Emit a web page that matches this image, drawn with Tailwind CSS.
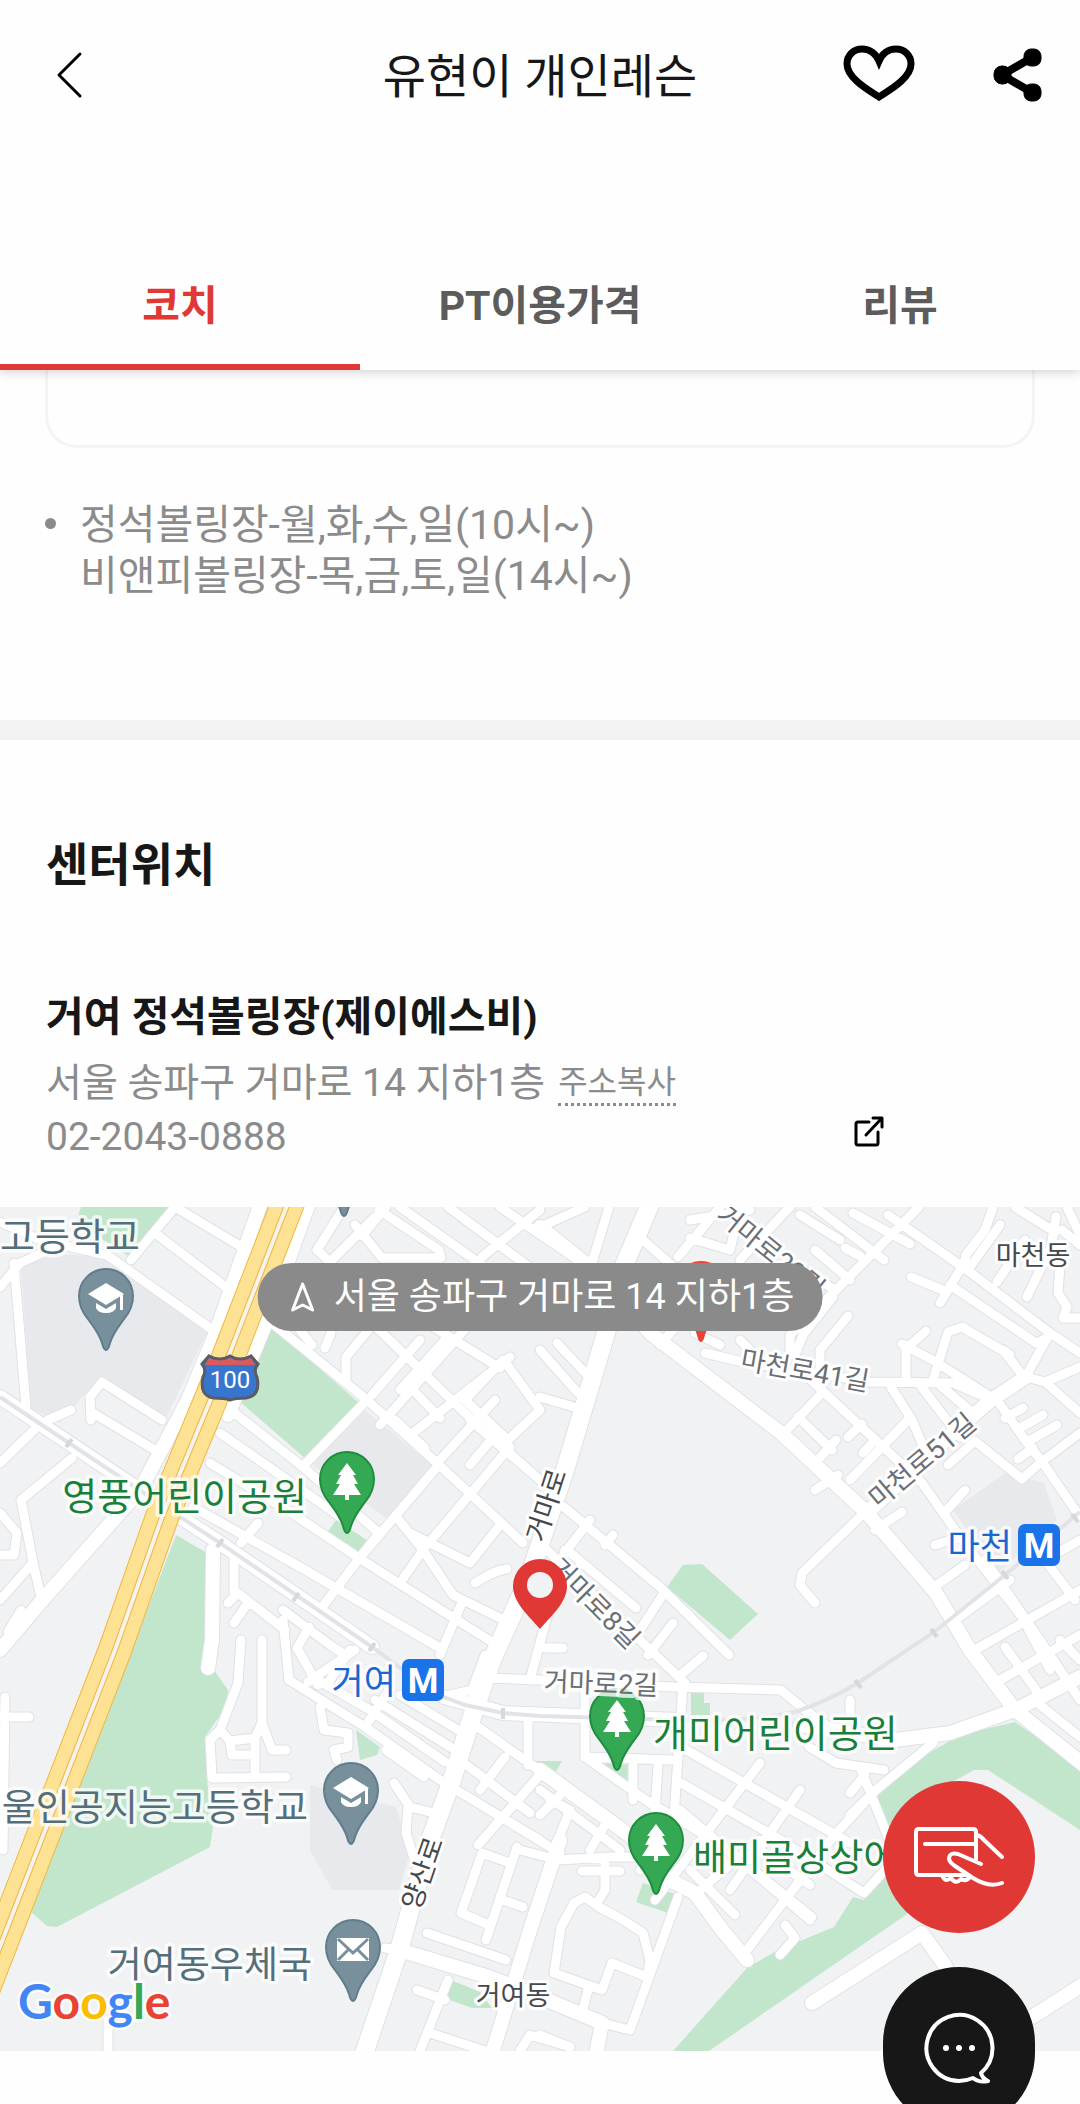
<!DOCTYPE html>
<html lang="ko">
<head>
    <meta charset="UTF-8">
    <meta name="viewport" content="width=device-width, initial-scale=1.0">
    <title>유현이 개인레슨</title>
    <script src="https://cdn.jsdelivr.net/npm/@tailwindcss/browser@4"></script>
</head>
<body class="bg-[#fefefe] font-[Roboto,'Noto_Sans_CJK_KR',sans-serif] text-[#171717] min-h-screen overflow-x-hidden">
    <!-- Header -->
    <header class="sticky top-0 z-20 bg-[#fefefe] shadow-[0_2px_10px_rgba(0,0,0,0.18)]">
        <div class="grid grid-cols-[1fr_auto_1fr] items-center h-[150px] px-[38px]">
            <button type="button" aria-label="뒤로" class="w-[58px] pl-[10px]">
                <svg class="w-[48px] h-[48px]" viewBox="0 0 48 48" fill="none" stroke="#000" stroke-width="3" stroke-linecap="round" stroke-linejoin="round"><path d="M32 3L11 24L32 45"/></svg>
            </button>
            <h1 class="pt-[4px] text-[47px] leading-[60px]">유현이 개인레슨</h1>
            <div class="flex items-center justify-end gap-[78px]">
                <button type="button" aria-label="찜하기">
                    <svg class="w-[72px] h-[60px]" viewBox="0 0 72 60" fill="none" stroke="#000" stroke-width="7"><path d="M36 52C29 47 4 34 4 19C4 10 11 4 19 4C27 4 33 9 36 16C39 9 45 4 53 4C61 4 68 10 68 19C68 34 43 47 36 52Z"/></svg>
                </button>
                <button type="button" aria-label="공유하기">
                    <svg class="w-[49px] h-[54px]" viewBox="0 0 49 54" stroke="#000"><path d="M40 9L9 27L40 45" fill="none" stroke-width="8"/><rect x="1" y="18" width="17" height="18" rx="8"/><rect x="31" y="1" width="17" height="17" rx="7"/><rect x="31" y="36" width="17" height="17" rx="7"/></svg>
                </button>
            </div>
        </div>
        <nav class="grid grid-cols-3 pt-[98px] text-[41px] leading-[116px] font-bold text-center text-[#5c5c5c]">
            <a href="#coach" class="border-b-[6px] border-[#e03835] text-[#e03835]">코치</a>
            <a href="#price" class="border-b-[6px] border-transparent">PT이용가격</a>
            <a href="#review" class="border-b-[6px] border-transparent">리뷰</a>
        </nav>
    </header>

    <main>
        <!-- Coach schedule -->
        <section id="coach" class="px-[45px] pb-[118px]">
            <div class="h-[78px] border-3 border-t-0 border-[#f4f4f4] rounded-b-[32px]"></div>
            <ul class="pt-[52px] text-[41px] leading-[51px] text-[#8b8b8b]">
                <li class="flex items-start gap-[24px]">
                    <span class="mt-[18px] size-[11px] rounded-full bg-[#8b8b8b]"></span>
                    <p>정석볼링장-월,화,수,일(10시~)<br>비앤피볼링장-목,금,토,일(14시~)</p>
                </li>
            </ul>
        </section>

        <div class="h-[20px] bg-[#f3f3f3]"></div>

        <!-- Center location -->
        <section class="pt-[95px]">
            <div class="px-[46px]">
                <h2 class="text-[46px] leading-[60px] font-bold">센터위치</h2>
                <h3 class="pt-[95px] text-[41px] leading-[54px] font-bold">거여 정석볼링장(제이에스비)</h3>
                <div class="flex items-end justify-between pt-[12px] pr-[148px] text-[39px] leading-[54px] text-[#8b8b8b]">
                    <div>
                        <p class="flex items-center gap-[13px]">서울 송파구 거마로 14 지하1층
                            <button type="button" class="h-[45px] border-b-3 border-dotted border-[#8b8b8b] text-[32px] leading-[42px]">주소복사</button>
                        </p>
                        <p><a href="tel:02-2043-0888">02-2043-0888</a></p>
                    </div>
                    <a href="#map" aria-label="지도 열기" class="pb-[16px]">
                        <svg class="w-[34px] h-[34px]" viewBox="0 0 34 34" fill="none" stroke="#000" stroke-width="3" stroke-linecap="round" stroke-linejoin="round"><path d="M17 8H6Q4 8 4 10V29Q4 31 6 31H24Q26 31 26 29V18M21 4H30V13M30 4L14 21"/></svg>
                    </a>
                </div>
            </div>

            <!-- Map -->
            <div id="map" class="relative mt-[43px] h-[844px] overflow-hidden bg-[#f1f2f4]">
                <svg class="w-full h-full" viewBox="0 1207 1080 844" preserveAspectRatio="xMidYMid slice" font-size="38">
                    <defs>
                        <path id="pin" d="M0 0C-2 0-3-3-4-7C-7-17-13-24-18-31C-24-38-27-45-27-54A27 27 0 0 1 27-54C27-45 24-38 18-31C13-24 7-17 4-7C3-3 2 0 0 0Z"/>
                        <g id="tree" fill="#fff"><path d="M0-70L9-58H6L11-49H7L14-38H2V-33H-2V-38H-14L-7-49H-11L-6-58H-9Z"/></g>
                        <g id="cap" fill="#fff"><path d="M-18-56L0-67L18-56L0-45ZM-10-47L0-41L10-47V-42Q8-37 0-37Q-8-37-10-42ZM14-55H17V-40H14Z"/></g>
                        <g id="minor">
                            <path d="M0 1222L40 1240L107 1255L210 1328M131 1260L175 1207L240 1246M155 1233L227 1288M0 1287L20 1263L60 1245M14 1263L26 1407M34 1430L0 1463M72 1458L21 1500L34 1567L41 1597M48 1420L71 1410M91 1420L90 1397L102 1382L162 1420M93 1413L155 1450M0 1513L17 1533L14 1555L0 1555M31 1565L0 1600M21 1610L8 1632"/>
                            <path d="M344 1207L317 1250L330 1262L375 1217M355 1225L382 1258L441 1258L439 1250L379 1210M386 1207L362 1236M448 1207L560 1290M482 1257L540 1210M400 1207L482 1265M500 1207L600 1275M540 1227L585 1207M609 1207L592 1263"/>
                            <path d="M272 1323L367 1400L437 1463L523 1543M367 1400L306 1463M227 1407L303 1467L379 1533L358 1560M220 1433L345 1520M210 1463L290 1512L362 1560L441 1610L492 1642M437 1467L358 1560L320 1610M193 1507L300 1567L440 1648M399 1520L423 1550L453 1595L463 1600L440 1655M423 1550L400 1583M410 1533L470 1563L500 1525M510 1447L427 1545M258 1523L241 1543M463 1600L500 1618M475 1583Q495 1570 507 1569M283 1620L289 1680M283 1610L330 1645L345 1655M309 1627L297 1648L318 1685M350 1650L330 1680"/>
                            <path d="M234 1557L234 1597L228 1603M238 1593L285 1630M248 1603L234 1623M300 1330L312 1345M331 1333L325 1348M346 1380L346 1357L385 1310M372 1323L465 1413L540 1480M430 1325L500 1368M503 1360L465 1400L508 1440L540 1410L505 1362M482 1310L380 1425M510 1357L413 1433M437 1463L495 1400M413 1390L440 1418M395 1420L425 1448M420 1340L372 1395M445 1340L400 1390M557 1343L592 1380M540 1350L578 1393M540 1397L574 1407M470 1465L495 1435M540 1480L470 1420"/>
                            <path d="M643 1240L685 1277M720 1207L678 1257M690 1238L730 1250M690 1220L750 1210M730 1250L738 1215M919 1207L836 1290L790 1335L790 1355M790 1207L740 1260M815 1207L884 1260M853 1213L910 1244M800 1215L840 1240M815 1250L850 1280M845 1248L860 1256M795 1265L835 1290M833 1297L803 1335L795 1355M848 1316L820 1350L820 1375M695 1333L720 1345M660 1345L715 1280M740 1340L760 1360M888 1215L967 1270L1050 1333L1080 1353M963 1265L940 1303M911 1277L945 1291M950 1285L1036 1343L1047 1338M993 1207L985 1230L966 1255L963 1267M1000 1225L970 1267M1056 1217L1051 1247L1027 1297M1025 1240L997 1282M1060 1265L1058 1293L1067 1307L1063 1318H1080M1062 1230L1080 1245M1015 1207L1055 1232M1067 1207L1080 1235"/>
                            <path d="M705 1353L747 1363L870 1382L953 1383L993 1400M1023 1376L1003 1350L1010 1355L962 1327L948 1332L933 1380M902 1344L936 1362L991 1397M906 1345V1380M926 1331L908 1347M1023 1376L1045 1382L1080 1367M1045 1382L1080 1413M997 1400L1025 1440L1043 1463L1080 1517M975 1441L1022 1479L1040 1463M948 1465L975 1441M1005 1418L1023 1408M1020 1428L1043 1415M1027 1442L1057 1425M1018 1459L1033 1448M1040 1463L1080 1433M1050 1333L1026 1376M891 1387L912 1420L926 1453M920 1385L960 1437M940 1385L975 1415M908 1420L850 1480M800 1370L922 1483L960 1537L991 1577L1022 1617L1050 1670M822 1393L784 1433M798 1417L832 1450M836 1440L815 1463M848 1437L862 1424M863 1453L875 1440M815 1490L838 1475M864 1513L802 1573L800 1585L815 1603M875 1530L902 1512M960 1537L935 1545M945 1512L965 1490"/>
                            <path d="M930 1590L965 1565M955 1620L1010 1580M975 1650L1080 1590M1000 1680L1080 1635M985 1560L1040 1640L1080 1700M1080 1540L1045 1560L1075 1600M1060 1640L1080 1660M1005 1647L1036 1690M1040 1705L1080 1737"/>
                            <path d="M564 1507L660 1587L729 1655M590 1520L567 1550L636 1608M664 1593L640 1630M605 1545L613 1535M673 1623L648 1655M547 1550L643 1643L685 1683M565 1550L530 1680M545 1648H563"/>
                            <path d="M241 1640L238 1683L220 1730L210 1740L212 1778L286 1777M262 1640V1723L272 1750H286M220 1730L230 1741L255 1738L262 1723M255 1738V1777M230 1741L232 1755H255M289 1680L365 1727L440 1780L560 1853M318 1680L370 1710L445 1762M375 1700L455 1750M389 1690L365 1727M355 1650L308 1682M320 1707L324 1730L348 1733V1747L334 1750L337 1760M386 1750L424 1777M400 1695L463 1733M478 1727L560 1785M460 1760L530 1813M451 1787L540 1840M528 1720V1765M540 1775L478 1845M394 1783L410 1807L430 1812M408 1807L406 1833L417 1867M505 1757L480 1790M450 1695L472 1690L485 1655M489 1678L540 1680L674 1687L781 1690L805 1710M5 1697L3 1850M0 1717H29"/>
                            <path d="M510 1863L482 1853L461 1913L489 1925M517 1847L486 1940M503 1900L523 1907M427 1933L506 1960M417 1990L445 2000M448 1980L420 2051M430 2033L485 2051M385 1948L399 1950M108 2020V2060M520 2051L530 2035L570 2047"/>
                            <path d="M683 1683L678 1757L674 1817L640 1870M585 1683V1757L671 1760M585 1757L650 1803L719 1843L812 1917M681 1747L850 1843M681 1783L781 1840L864 1893L885 1870M680 1810L810 1920M760 1763L678 1870L655 1900M800 1790L730 1890M876 1790L833 1837L747 1950M933 1743L876 1790L850 1815M809 1747L836 1763L884 1770M860 1767L888 1837M865 1775L850 1793M520 1850L558 1860L609 1857L640 1857M633 1765V1800M658 1765L655 1812M703 1656L683 1673M850 1700V1720M805 1710L840 1735M690 1870L735 1915M760 1850L810 1885M785 1925L795 1938L780 1955M700 1890L760 1840M605 1863V1890L597 1903M582 1871H620M550 1800L570 1810L560 1835M540 1815L560 1795M605 1825L590 1850M540 1790L620 1850M585 1897L599 1907L623 1920L643 1933L650 1960L647 1977L612 1963L602 1990L554 1973L561 1927L574 1903ZM588 1990L582 2013M678 1897L630 2030L602 2023M540 2035L570 2047"/>
                        </g>
                        <g id="major">
                            <path d="M262 1200L215 1335L188 1400L140 1490L45 1597L0 1650M310 1200L265 1325L228 1415M0 1397L165 1507L220 1543L372 1647M444 1697L503 1713L678 1720M213 1550L212 1640L208 1668M540 1770L640 1843L670 1880L695 1893L722 1930L747 1960M399 1950L489 1977L540 1997L602 2023L595 2060M560 1840L530 1930L490 2060M1080 1677L1015 1710L950 1733L895 1740L800 1725M812 2003L922 1933L946 1967M1032 2017L1090 1980M1026 1377L991 1400L953 1433L870 1510"/>
                            <path d="M540 1227L600 1275L650 1333L781 1433L867 1513L936 1593L970 1650L1015 1710L1090 1770"/>
                        </g>
                        <g id="main">
                            <path d="M652 1200L620 1275L606 1333L565 1470L528 1580L492 1660L472 1717L451 1783L430 1840L399 1950L362 2060"/>
                        </g>
                    </defs>

                    <!-- school and station grounds -->
                    <g fill="#e8e9ed">
                        <path d="M21 1267L45 1253L107 1257L207 1333L165 1420L100 1377L59 1423L31 1408ZM365 1410L434 1467L389 1520L310 1463ZM1005 1473L1044 1483L1057 1520L998 1573L953 1510ZM310 1785L396 1807L410 1853L399 1890H332L310 1850Z"/>
                    </g>
                    <!-- parks -->
                    <g fill="#c2e6cc">
                        <path d="M81 1207H170L131 1258L76 1222ZM267 1323L358 1402L307 1460L238 1400ZM336 1520L370 1542L360 1555L327 1533ZM176 1535L207 1553V1640L214 1670L228 1690L226 1707L205 1737L207 1780L213 1827L210 1847L57 1927L47 1926L31 1912ZM683 1565L702 1564L758 1614L730 1640L667 1587ZM356 1730L380 1747L377 1755L360 1760ZM451 1980L480 1992L492 2008H472L444 1998ZM691 1692H704V1703H710V1715H691ZM595 1763L633 1765V1788ZM530 1761H562L554 1775ZM643 1883L678 1895L671 1914L636 1902Z"/>
                        <path d="M1015 1722L1080 1767V1830L988 1770H974L920 1800L905 1860L910 1912L709 2051H673L747 1968L778 1950L834 1927L853 1897L864 1900L884 1873L888 1837L876 1795L922 1757L960 1735Z"/>
                    </g>
                    <!-- roads: grey casing below, white on top -->
                    <g fill="none" stroke="#dfe1e5" stroke-linecap="round" stroke-linejoin="round">
                        <use href="#minor" stroke-width="11"/>
                        <use href="#major" stroke-width="16"/>
                        <use href="#main" stroke-width="20"/>
                    </g>
                    <g fill="none" stroke="#fff" stroke-linecap="round" stroke-linejoin="round">
                        <use href="#minor" stroke-width="9"/>
                        <use href="#major" stroke-width="14"/>
                        <use href="#main" stroke-width="18"/>
                    </g>
                    <!-- subway line -->
                    <path d="M0 1397L69 1443L165 1507L220 1543L372 1647L403 1670L444 1697L465 1705L503 1713L540 1716L678 1720Q750 1722 795 1712Q830 1700 858 1683L934 1632L1005 1575L1080 1512" fill="none" stroke="#e1e3e6" stroke-width="4"/>
                    <path d="M66 1447L72 1439M217 1547L223 1539M293 1601L299 1593M369 1651L375 1643M503 1708V1719M855 1680L861 1688M931 1629L937 1637M1002 1571L1008 1579M1072 1514L1078 1522" stroke="#d6d9dc" stroke-width="4"/>
                    <!-- expressway -->
                    <g fill="none">
                        <path d="M289 1200L229 1355L162 1517L115 1650L-20 1998" stroke="#f0b840" stroke-width="34"/>
                        <path d="M289 1200L229 1355L162 1517L115 1650L-20 1998" stroke="#fde293" stroke-width="32"/>
                        <path d="M289 1200L229 1355L162 1517L115 1650L-20 1998" stroke="#eeb541" stroke-width="6"/>
                        <path d="M289 1200L229 1355L162 1517L115 1650L-20 1998" stroke="#f5f3ec" stroke-width="4"/>
                    </g>

                    <!-- route shield -->
                    <g>
                        <path d="M209 1356Q220 1362 230 1356Q240 1362 251 1356L258 1364Q253 1370 257 1377Q261 1396 246 1398Q236 1398 230 1400Q224 1398 214 1398Q199 1396 203 1377Q207 1370 202 1364Z" fill="#3875cf" stroke="#5b5b63" stroke-width="3"/>
                        <path d="M209 1358Q220 1363 230 1358Q240 1363 251 1358L255 1365H205Z" fill="#dd5a5a"/>
                        <text x="230" y="1388" text-anchor="middle" font-size="24" fill="#fff">100</text>
                    </g>

                    <!-- street names -->
                    <g text-anchor="middle" font-size="27" fill="#6b6f75" stroke="#fff" stroke-width="6" stroke-linejoin="round" paint-order="stroke">
                        <text transform="translate(771 1251) rotate(39)" y="10">거마로29길</text>
                        <text transform="translate(805 1370) rotate(10)" y="10">마천로41길</text>
                        <text transform="translate(922 1460) rotate(-40)" y="10">마천로51길</text>
                        <text transform="translate(595 1603) rotate(45)" y="10">거마로8길</text>
                        <text transform="translate(546 1505) rotate(-72)" y="10" fill="#45484d">거마로</text>
                        <text transform="translate(422 1873) rotate(-71)" y="10" fill="#45484d">양산로</text>
                        <text x="1033" y="1265" fill="#45484d">마천동</text>
                        <text x="513" y="2005" fill="#45484d">거여동</text>
                    </g>

                    <!-- place pins -->
                    <g fill="#78909c" stroke="#607d8b" stroke-width="2">
                        <use href="#pin" x="106" y="1350"/>
                        <use href="#pin" x="344" y="1216"/>
                        <use href="#pin" x="351" y="1844"/>
                        <use href="#pin" x="353" y="2001"/>
                    </g>
                    <use href="#cap" x="106" y="1350"/>
                    <use href="#cap" x="351" y="1844"/>
                    <rect x="337" y="1938" width="32" height="23" fill="#fff"/>
                    <path d="M338 1939L353 1953L368 1939M338 1960L349 1949M368 1960L357 1949" fill="none" stroke="#78909c" stroke-width="3"/>
                    <g fill="#34a853" stroke="#1e8e3e" stroke-width="2">
                        <use href="#pin" x="347" y="1533"/>
                        <use href="#pin" x="617" y="1770"/>
                        <use href="#pin" x="656" y="1894"/>
                    </g>
                    <use href="#tree" x="347" y="1533"/>
                    <use href="#tree" x="617" y="1770"/>
                    <use href="#tree" x="656" y="1894"/>
                    <use href="#pin" x="701" y="1342" fill="#ea4335"/>
                    <text transform="translate(601 1683) rotate(2)" y="10" text-anchor="middle" font-size="27" fill="#6b6f75" stroke="#fff" stroke-opacity="0.8" stroke-width="8" stroke-linejoin="round" paint-order="stroke">거마로2길</text>

                    <!-- place names -->
                    <g stroke="#fff" stroke-opacity="0.75" stroke-width="7" stroke-linejoin="round" paint-order="stroke">
                        <g fill="#546e7a">
                            <text x="0" y="1250">고등학교</text>
                            <text x="308" y="1821" text-anchor="end" font-size="37">울인공지능고등학교</text>
                            <text x="312" y="1978" text-anchor="end" font-size="37">거여동우체국</text>
                        </g>
                        <g fill="#188038">
                            <text x="307" y="1510" text-anchor="end">영풍어린이공원</text>
                            <text x="653" y="1747">개미어린이공원</text>
                            <text x="693" y="1871" font-size="37">배미골상상어린이공원</text>
                        </g>
                        <g fill="#1967d2" font-size="35">
                            <text x="1012" y="1559" text-anchor="end">마천</text>
                            <text x="396" y="1694" text-anchor="end">거여</text>
                        </g>
                    </g>
                    <g fill="#1a73e8">
                        <rect x="1018" y="1524" width="42" height="42" rx="7"/>
                        <rect x="402" y="1659" width="42" height="42" rx="7"/>
                    </g>
                    <g fill="#fff" text-anchor="middle" font-size="35" font-weight="700">
                        <text x="1039" y="1558">M</text>
                        <text x="423" y="1693">M</text>
                    </g>

                    <!-- center marker -->
                    <path fill="#e03835" d="M540 1629C530 1617 513 1603 513 1586A27 27 0 0 1 567 1586C567 1603 550 1617 540 1629Z"/>
                    <circle cx="540" cy="1585" r="13" fill="#f1f2f4"/>

                    <text x="18" y="2019" font-family="Lato, sans-serif" font-size="48" font-weight="700" stroke="#fff" stroke-opacity="0.8" stroke-width="5" paint-order="stroke"><tspan fill="#4285f4">G</tspan><tspan fill="#ea4335">o</tspan><tspan fill="#fbbc04">o</tspan><tspan fill="#4285f4">g</tspan><tspan fill="#34a853">l</tspan><tspan fill="#ea4335">e</tspan></text>
                </svg>

                <div class="absolute top-[56px] left-1/2 -translate-x-1/2 flex items-center gap-[18px] h-[68px] pl-[32px] pr-[28px] rounded-full bg-[#8a8a8a] text-white text-[36px] whitespace-nowrap">
                    <svg class="w-[26px] h-[32px]" viewBox="0 0 26 32" fill="none" stroke="#fff" stroke-width="3" stroke-linejoin="round"><path d="M13 3L3 29L13 24L23 29Z"/></svg>
                    서울 송파구 거마로 14 지하1층
                </div>
            </div>
        </section>
    </main>

    <!-- Floating buttons -->
    <div class="fixed right-[45px] bottom-[-25px] z-30 flex flex-col gap-[34px]">
        <button type="button" aria-label="결제하기" class="flex items-center justify-center size-[152px] rounded-full bg-[#e03835]">
            <svg class="w-[92px] h-[62px]" viewBox="0 0 92 62" fill="none" stroke="#fff" stroke-width="4" stroke-linecap="round" stroke-linejoin="round">
                <path d="M29 49H6Q3 49 3 46V6Q3 3 6 3H60Q63 3 63 6V34M12 18H62M64 9Q68 10 71 14L89 31M68 38L45 28Q37 26 36 32Q36 36 42 40L60 52Q76 62 89 57M29 49Q32 57 38 52Q43 59 48 53Q53 56 57 51M29 49H55"/>
            </svg>
        </button>
        <button type="button" aria-label="채팅 상담" class="flex items-center justify-center w-[152px] h-[162px] rounded-full bg-[#171717]">
            <svg class="w-[72px] h-[72px]" viewBox="0 0 72 72" fill="none" stroke="#fff" stroke-width="4" stroke-linejoin="round">
                <path d="M50 66Q43 69 36 69A33 33 0 1 1 58 61Q59 66 65 69Q56 71 50 66Z"/>
                <g fill="#fff" stroke="none"><circle cx="23" cy="36" r="3"/><circle cx="36" cy="36" r="3"/><circle cx="49" cy="36" r="3"/></g>
            </svg>
        </button>
    </div>
</body>
</html>
